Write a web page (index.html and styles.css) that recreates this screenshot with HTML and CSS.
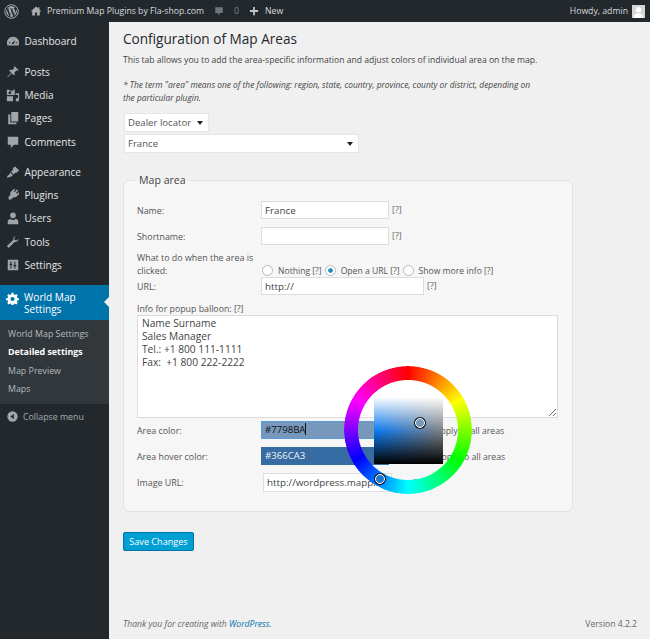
FILE: index.html
```html
<!DOCTYPE html>
<html lang="en">
<head>
<meta charset="utf-8">
<title>Configuration of Map Areas</title>
<link rel="stylesheet" href="styles.css">
</head>
<body>
<header class="adminbar">
  <svg class="ab-logo" viewBox="0 0 20 20"><circle cx="10" cy="10" r="9" fill="none" stroke="#a8adb2" stroke-width="1.3"/><path fill="#a8adb2" d="M3 10c0 2.800 1.600 5.200 4 6.300L3.700 7.200C3.300 8.100 3 9 3 10zm11.700-.4c0-.9-.3-1.500-.6-2-.3-.6-.7-1-.7-1.600 0-.6.500-1.200 1.200-1.200h.1A7 7 0 0 0 4.200 6.100h.5c.7 0 1.900-.1 1.900-.1.400 0 .4.500 0 .6 0 0-.4 0-.8.100l2.600 7.700 1.500-4.600-1.100-3c-.4 0-.7-.1-.7-.1-.4 0-.4-.6 0-.6 0 0 1.200.1 1.900.1.700 0 1.900-.1 1.900-.1.400 0 .4.500 0 .6 0 0-.4 0-.8.100l2.500 7.600.7-2.400c.3-1 .6-1.700.6-2.400zM10.100 10.600l-2.100 6.100a7 7 0 0 0 4.300-.1l-2.200-6zm6-3.900c0 .3.100.6.100.9 0 .7-.1 1.500-.5 2.500l-2.100 6.100a7 7 0 0 0 2.500-9.500z"/></svg>
  <svg class="ab-icon" viewBox="0 0 16 16"><path fill="#a8adb2" d="M8 2 1 8.500h2V14h3.600v-4h2.800v4H13V8.500h2L12.500 6V3h-1.800v1.300z"/></svg>
  <span class="ab-site">Premium Map Plugins by Fla-shop.com</span>
  <svg class="ab-comment" viewBox="0 0 16 16"><path fill="#70757a" d="M3 3h10v7.500H8.500V14L5.500 10.500H3z"/></svg>
  <span class="ab-count">0</span>
  <svg class="ab-plus" viewBox="0 0 16 16"><path fill="#c0c4c8" d="M6.800 2.500h2.400v4.300h4.300v2.400H9.200v4.300H6.800V9.200H2.500V6.800h4.300z"/></svg>
  <span class="ab-new">New</span>
  <span class="ab-howdy">Howdy, admin</span>
  <svg class="ab-avatar" viewBox="0 0 14 14"><rect width="14" height="14" fill="#d5d5d5"/><circle cx="7" cy="5" r="2.800" fill="#fff"/><path fill="#fff" d="M2 14c0-3.500 2-5 5-5s5 1.500 5 5z"/></svg>
</header>

<div class="shell">
  <nav class="sidebar">
    <ul class="menu menu-first">
      <li><svg viewBox="0 0 16 16"><path fill="currentColor" d="M8 3a7 7 0 0 0-7 7c0 1.100.3 2.100.7 3h12.600c.4-.9.700-1.900.7-3a7 7 0 0 0-7-7zm0 2 .8 1H7.200zM3.500 9.500H5v1H3zm8 0H13v1h-2zM8.700 11.500a1.200 1.200 0 0 1-1.800-1.500L11 7z"/></svg>Dashboard</li>
    </ul>
    <ul class="menu menu-second">
      <li><svg viewBox="0 0 16 16"><path fill="currentColor" d="M10 1.500 14.500 6l-1.300.6-1-.5-2.600 2.500c.6 1.300.4 2.500-.4 3.400L6.700 9.500 2 14l-.5-.5L6 8.800 3.500 6.300c.9-.9 2.200-1.100 3.400-.4l2.500-2.600-.5-1z"/></svg>Posts</li>
      <li><svg viewBox="0 0 16 16"><path fill="currentColor" d="M1 2h3l.7 1h3l.6-1H10v6H1zm3.500 1.800a1.600 1.600 0 1 0 .01 0zM1 9.500h7V15H1zM11 6h4v7.500a2 2 0 1 1-1.200-1.800V8H11z"/></svg>Media</li>
      <li><svg viewBox="0 0 16 16"><path fill="currentColor" d="M6 1h8v11H6zM2.500 4H5v9h7v2H2.500z"/></svg>Pages</li>
      <li><svg viewBox="0 0 16 16"><path fill="currentColor" d="M2 2h12v9H9l-3.500 4v-4H2z"/></svg>Comments</li>
    </ul>
    <ul class="menu menu-third">
      <li><svg viewBox="0 0 16 16"><path fill="currentColor" d="M10 1.500 15 6l-3.200 3.200-1.200-.4-1.800 2-3-3 2-2-.3-1.300zM4.800 8.500l3 3c-.8 1.300-3 3-6.800 3C2 13 1 12 3 11.500c1-.4 1.200-2 1.800-3z"/></svg>Appearance</li>
      <li><svg viewBox="0 0 16 16"><path fill="currentColor" d="M12.500 1.500 14 3l-2.500 2.500 1 1 2.500-2-.2 2.500-2.300 2.500c-1.300 1.300-3 1.500-4.500 1l-2 2.500H3v-3l2-2c-.5-1.500-.3-3 1-4l2.500-2.500 2.500-.2-2 2.500 1 1z"/></svg>Plugins</li>
      <li><svg viewBox="0 0 16 16"><circle cx="8" cy="5" r="3.200" fill="currentColor"/><path fill="currentColor" d="M2 15v-3c0-2 1.500-3 3-3 1 .8 2 1.200 3 1.200s2-.4 3-1.200c1.500 0 3 1 3 3v3z"/></svg>Users</li>
      <li><svg viewBox="0 0 16 16"><path fill="currentColor" d="M11.500 1.500c-2.200 0-3.800 2-3.200 4.100L1.700 12c-.7.800-.2 2.300 1.500 2.500l6.700-6.600c2.200.6 4.400-1.200 4.300-3.600l-2.200 2-2.200-.6-.6-2.200 2.200-2z"/></svg>Tools</li>
      <li><svg viewBox="0 0 16 16"><path fill="currentColor" fill-rule="evenodd" d="M2 2h12v12H2zM5 4v2.500H4V8h1v4h1.200V8h1V6.500h-1V4zm4.500 0v4h-1v1.500h1V12h1.200V9.500h1V8h-1V4z"/></svg>Settings</li>
    </ul>
    <div class="current">
      <svg viewBox="0 0 16 16"><path fill="#fff" fill-rule="evenodd" d="M6.800 1h2.400l.4 2 1.300.6 1.800-1.100 1.700 1.700-1.100 1.800.6 1.300 2 .4v2.400l-2 .4-.6 1.300 1.100 1.800-1.700 1.700-1.800-1.100-1.300.6-.4 2H6.800l-.4-2-1.300-.6-1.800 1.100-1.700-1.700 1.100-1.800-.6-1.300-2-.4V7.700l2-.4.6-1.300-1.100-1.800 1.700-1.700 1.800 1.100 1.300-.6zM8 6a2.500 2.500 0 1 0 .01 0z"/></svg>
      <span>World Map Settings</span>
    </div>
    <ul class="submenu">
      <li>World Map Settings</li>
      <li class="active">Detailed settings</li>
      <li>Map Preview</li>
      <li>Maps</li>
    </ul>
    <div class="collapse">
      <svg viewBox="0 0 16 16"><circle cx="8" cy="8" r="7.500" fill="#a0a5aa"/><path fill="#23282d" d="M10 4.500v7L4.800 8z"/></svg>
      Collapse menu
    </div>
  </nav>

  <main class="content">
    <h2 class="title">Configuration of Map Areas</h2>
    <p class="intro">This tab allows you to add the area-specific information and adjust colors of individual area on the map.</p>
    <p class="note">* The term "area" means one of the following: region, state, country, province, county or district, depending on the particular plugin.</p>
    <div class="select select-short">Dealer locator</div>
    <div class="select select-long">France</div>

    <form>
      <fieldset class="panel">
        <legend>Map area</legend>
        <div class="row row-name"><label>Name:</label><input class="field" type="text" value="France"><span class="hint">[?]</span></div>
        <div class="row row-short"><label>Shortname:</label><input class="field" type="text"><span class="hint">[?]</span></div>
        <div class="row row-action">
          <label>What to do when the area is clicked:</label>
          <div class="radios">
            <input type="radio" name="act"><span class="radio-text">Nothing [?]</span>
            <input type="radio" name="act" checked><span class="radio-text">Open a URL [?]</span>
            <input type="radio" name="act"><span class="radio-text">Show more info [?]</span>
          </div>
        </div>
        <div class="row row-url"><label>URL:</label><input class="field field-url" type="text" value="http://"><span class="hint">[?]</span></div>
        <div class="info-label">Info for popup balloon: [?]</div>
        <textarea class="info" rows="6">Name Surname
Sales Manager
Tel.: +1 800 111-1111
Fax:  +1 800 222-2222</textarea>
        <div class="row row-color"><label>Area color:</label><div class="swatch swatch-a">#7798BA<i class="caret"></i></div><span class="apply">Apply to all areas</span></div>
        <div class="row row-hover"><label>Area hover color:</label><div class="swatch swatch-b">#366CA3</div><span class="apply apply-b">Apply to all areas</span></div>
        <div class="row row-image"><label>Image URL:</label><input class="field field-image" type="text" value="http://wordpress.mapplic.com/"><span class="hint hint-image">[?]</span></div>
      </fieldset>
      <button class="save" type="button">Save Changes</button>
    </form>

    <footer class="footer">
      <span class="thanks">Thank you for creating with <a>WordPress</a>.</span>
      <span>Version 4.2.2</span>
    </footer>
  </main>
</div>

<div class="picker">
  <div class="picker-ring"></div>
  <div class="picker-square"></div>
  <span class="dot dot-sv"></span>
  <span class="dot dot-hue"></span>
</div>
</body>
</html>
```

FILE: styles.css
```css
* { box-sizing: border-box; }
html, body { height: 100%; }
body {
  margin: 0;
  overflow: hidden;
  background: #f0f0f0;
  color: #444;
  font-family: "Open Sans", "Noto Sans", sans-serif;
  font-size: 10px;
  position: relative;
}

.adminbar {
  height: 22px;
  background: #23282d;
  color: #d8dbde;
  display: flex;
  align-items: center;
  font-size: 8.700px;
  padding: 0 5px 0 4px;
}
.ab-logo { width: 15px; height: 15px; margin-right: 11px; }
.ab-icon { width: 12px; height: 12px; margin-right: 5px; }
.ab-site { margin-right: 9px; white-space: nowrap; }
.ab-comment { width: 12px; height: 12px; margin-right: 9px; }
.ab-count { color: #80858a; margin-right: 9px; }
.ab-plus { width: 12px; height: 12px; margin-right: 5px; }
.ab-howdy { margin-left: auto; margin-right: 4px; }
.ab-avatar { width: 13px; height: 13px; }

.shell { display: flex; height: 617px; }

.sidebar {
  width: 109px;
  flex: none;
  background: #23282d;
  color: #e4e6e8;
  font-size: 10.100px;
  padding-top: 7px;
}
.menu { list-style: none; margin: 0; padding: 0; }
.menu-first { margin-bottom: 8.300px; }
.menu-second { margin-bottom: 7.200px; }
.menu-third { margin-bottom: 9px; }
.menu li {
  height: 23.2px;
  display: flex;
  align-items: center;
  padding-left: 6px;
}
.menu svg { width: 14px; height: 14px; margin-right: 4.500px; color: #a0a5aa; flex: none; }

.current {
  height: 35px;
  background: #0073aa;
  color: #fff;
  display: flex;
  align-items: center;
  padding-left: 6px;
  position: relative;
  line-height: 12px;
}
.current svg { width: 13px; height: 13px; margin: 0 5px 9px 0; flex: none; }
.current span { width: 70px; }
.current::after {
  content: "";
  position: absolute;
  right: 0;
  top: 12px;
  border: 5px solid transparent;
  border-right-color: #f0f0f0;
  border-left-width: 0;
}

.submenu {
  list-style: none;
  margin: 0;
  padding: 4px 0 5px 8px;
  height: 84px;
  background: #32373c;
  color: #b4b9be;
  font-size: 8.850px;
}
.submenu li { height: 18.500px; display: flex; align-items: center; white-space: nowrap; }
.submenu .active { color: #fff; font-weight: 700; }

.collapse {
  display: flex;
  align-items: center;
  padding: 2px 0 0 7px;
  height: 23px;
  color: #a8adb2;
  font-size: 8.800px;
  white-space: nowrap;
}
.collapse svg { width: 11px; height: 11px; margin-right: 5px; }

.content {
  flex: 1;
  padding: 0 77px 0 14px;
  display: flex;
  flex-direction: column;
  position: relative;
}
.title {
  margin: 7px 0 0;
  font-size: 13.600px;
  font-weight: 400;
  line-height: 20px;
  color: #23282d;
}
.intro { margin: 5px 0 0; font-size: 8.600px; line-height: 13px; white-space: nowrap; }
.note { margin: 11px 0 0; font-size: 8.400px; line-height: 13px; font-style: italic; max-width: 415px; }

.select {
  background: #fff;
  border: 1px solid #e6e6e6;
  height: 19px;
  line-height: 17px;
  padding-left: 3px;
  font-size: 9.600px;
  color: #555;
  position: relative;
  margin-left: 1px;
}
.select::after {
  content: "";
  position: absolute;
  right: 5px;
  top: 7px;
  border: 3px solid transparent;
  border-top: 4px solid #222;
  border-bottom-width: 0;
}
.select-short { width: 85px; margin-top: 9px; }
.select-long { width: 235px; margin-top: 2px; }

.panel {
  margin: 20px 0 0;
  padding: 14px 13px 0;
  height: 339px;
  background: #f6f6f6;
  border: 1px solid #e2e2e2;
  border-radius: 6px;
  min-width: 0;
}
.panel legend {
  margin-left: -2px;
  padding: 0 2px 0 4px;
  font-size: 10.600px;
  line-height: 14px;
  color: #444;
}

.row { display: flex; align-items: center; font-size: 8.900px; }
.row label { width: 124px; flex: none; color: #555; }
.row-name { height: 18px; }
.row-short { height: 18px; margin-top: 8px; }
.row-action { align-items: flex-end; margin-top: 6px; height: 26px; }
.row-url { height: 18px; margin-top: 0; }
.row-color { height: 18px; margin-top: 3px; }
.row-hover { height: 18px; margin-top: 8px; }
.row-image { height: 19px; margin-top: 8px; }

.field {
  width: 128px;
  height: 100%;
  border: 1px solid #ddd;
  background: #fff;
  padding: 0 3px;
  font: 9.800px "Open Sans", sans-serif;
  color: #444;
  outline: none;
  border-radius: 0;
}
.field-url { width: 163px; }
.field-image { width: 129px; margin-left: 2px; }
.hint { margin-left: 3px; color: #666; font-size: 8.800px; }
.hint-image { margin-left: 21px; }

.radios { display: flex; align-items: center; height: 13px; padding-left: 1px; font-size: 8.600px; color: #555; white-space: nowrap; }
.radios input {
  appearance: none;
  width: 11px;
  height: 11px;
  margin: 0 5px 0 0;
  border: 1px solid #b4b9be;
  border-radius: 50%;
  background: #fff;
  flex: none;
}
.radios input:checked {
  background: radial-gradient(circle, #1e8cbe 0 2px, #fff 2.500px);
}
.radio-text { margin-right: 3px; }

.info-label { margin-top: 8px; font-size: 8.800px; line-height: 12px; color: #555; }
.info {
  display: block;
  width: 421px;
  height: 103px;
  margin: 0;
  border: 1px solid #ddd;
  background: #fff;
  padding: 1px 4px;
  font: 10.200px/13px "Open Sans", sans-serif;
  color: #444;
  white-space: pre;
  resize: both;
  outline: none;
  overflow: hidden;
  border-radius: 0;
}

.swatch {
  width: 128px;
  height: 100%;
  padding-left: 3px;
  font-size: 9.600px;
  line-height: 16px;
  border: 1px solid transparent;
  flex: none;
}
.swatch-a { background: #7798ba; border-color: #5b9dd9; color: #111; }
.swatch-b { background: #366ca3; color: #f4f4f4; }
.caret { display: inline-block; width: 1px; height: 12px; background: #111; vertical-align: -2px; }
.apply { margin: 2px 0 0 46px; color: #555; font-size: 8.700px; white-space: nowrap; }
.apply-b { margin-left: 47px; }

.save {
  align-self: flex-start;
  display: block;
  margin-top: 20px;
  width: 71px;
  height: 19px;
  padding: 0;
  background: #00a0d2;
  border: 1px solid #0073aa;
  border-radius: 2px;
  color: #fff;
  font: 9.100px "Open Sans", sans-serif;
}

.footer {
  margin-top: auto;
  height: 21px;
  margin-right: -64px;
  display: flex;
  justify-content: space-between;
  color: #666;
  font-size: 8.600px;
}
.thanks { font-style: italic; }
.thanks a { color: #0073aa; }

.picker {
  position: absolute;
  left: 344px;
  top: 366px;
  width: 128px;
  height: 128px;
}
.picker-ring {
  width: 100%;
  height: 100%;
  border-radius: 50%;
  background: conic-gradient(#f00, #ff0 60deg, #0f0 120deg, #0ff 180deg, #00f 240deg, #f0f 300deg, #f00);
  -webkit-mask: radial-gradient(circle, transparent 49.500px, #000 50.500px);
  mask: radial-gradient(circle, transparent 49.500px, #000 50.500px);
}
.picker-square {
  position: absolute;
  left: 30px;
  top: 31px;
  width: 69px;
  height: 67px;
  background:
    linear-gradient(to bottom, #fff, rgba(255,255,255,0) 50%, rgba(0,0,0,0) 50%, #000),
    linear-gradient(to right, #0a7cf5, #808080);
}
.dot {
  position: absolute;
  width: 10px;
  height: 10px;
  border-radius: 50%;
  border: 1.500px solid #fff;
  box-shadow: 0 0 0 1px #111;
}
.dot-sv { left: 71px; top: 52px; background: #7798ba; }
.dot-hue { left: 31px; top: 108px; background: #1f78d0; }
```
